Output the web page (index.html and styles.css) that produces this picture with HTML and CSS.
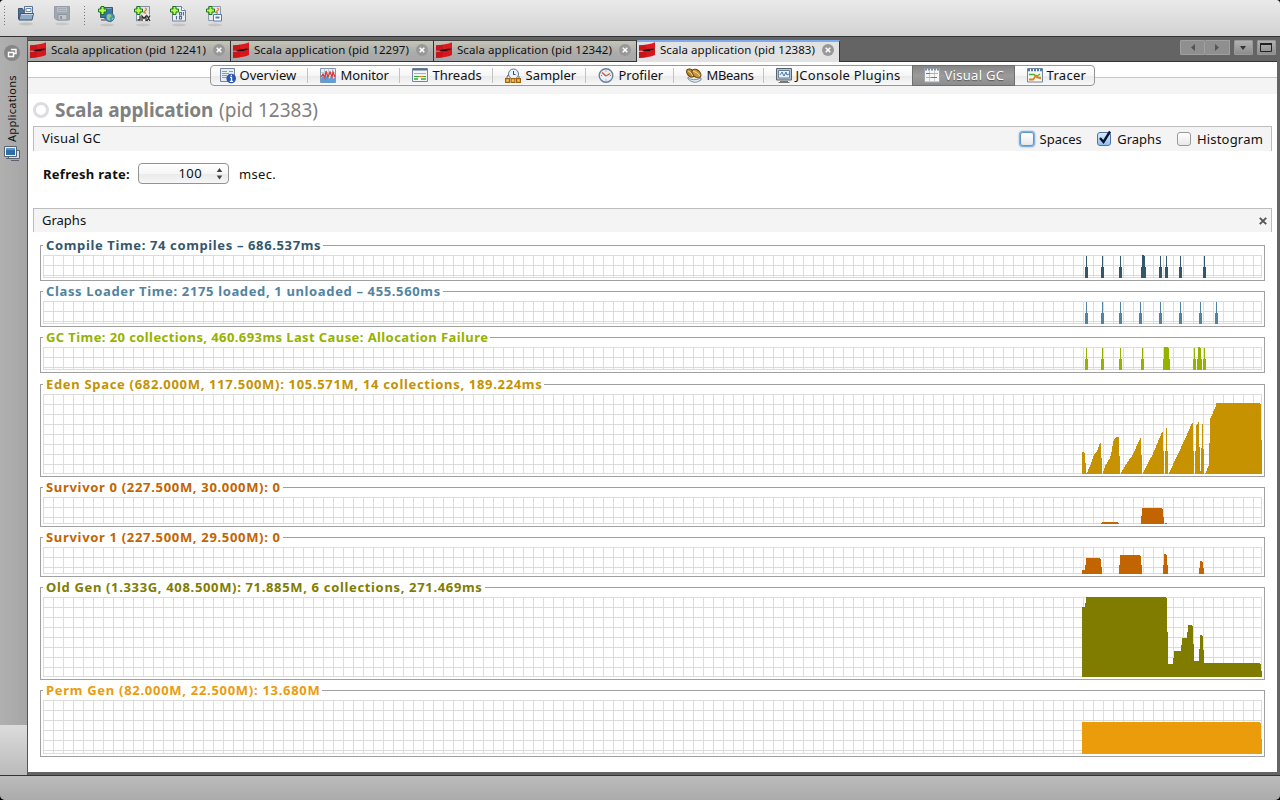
FILE: index.html
```html
<!DOCTYPE html>
<html lang="en">
<head>
<meta charset="utf-8">
<title>VisualVM</title>
<link rel="stylesheet" href="styles.css">
</head>
<body>
<svg class="defs" width="0" height="0">
  <defs>
    <symbol id="scala" viewBox="0 0 17 16">
      <path d="M0 3.300Q10 3 16 .3V6.500Q9 9 0 8.800z" fill="#dc1a20"/>
      <path d="M0 9.800Q10 9.800 16 7V13Q10 15.500 0 16z" fill="#d8161c"/>
      <path d="M3 8.200Q9 6.800 16 6.500V7.300Q11 9.600 5 9.600z" fill="#2a0c0e"/>
      <path d="M0 3.300Q4 3.200 7 2.800V8Q4 8.600 0 8.800zM0 9.800Q4 9.800 7 9.500V15.300L0 16z" fill="#a80e14" opacity=".35"/>
    </symbol>
    <symbol id="close" viewBox="0 0 12 12">
      <circle cx="6" cy="6" r="6" fill="#989898"/>
      <path d="M3.700 3.700l4.600 4.600M8.300 3.700l-4.600 4.600" stroke="#fff" stroke-width="1.600"/>
    </symbol>
    <symbol id="plus" viewBox="0 0 9 9">
      <path d="M3 .5h3V3h2.500v3H6v2.500H3V6H.5V3H3z" fill="#b4f650" stroke="#187a10"/>
    </symbol>
  </defs>
</svg>
<div class="window">
  <header class="toolbar">
    <i class="grip"></i>
    <svg class="tool open" width="18" height="22" viewBox="0 0 18 22">
      <ellipse cx="9" cy="19" rx="7" ry="1.500" fill="#c2c2c2"/>
      <path d="M1.500 3.500h4l1 2h3V14h-8z" fill="#55708f" stroke="#3c5673"/>
      <path d="M7.500 1.500h8v9h-8z" fill="#eef4fa" stroke="#5b7391"/>
      <path d="M9 3.500h5v3H9z" fill="#fff" stroke="#5f86b4"/>
      <path d="M3.500 8.500h13l-1.500 6.500h-13z" fill="#8eacc9" stroke="#3c5673"/>
      <path d="M4 9.500h12" stroke="#c3d6e8"/>
    </svg>
    <svg class="tool save" width="18" height="22" viewBox="0 0 18 22">
      <ellipse cx="9" cy="19" rx="7" ry="1.500" fill="#c8c8c8"/>
      <path d="M1.500 1.500h15v13.500h-13l-2-2z" fill="#a0a7b0" stroke="#969da6"/>
      <path d="M4 2h10v5H4z" fill="#b8bec6"/><path d="M5 3.500h8M5 5.500h8" stroke="#a2a9b2"/>
      <path d="M5 9.500h9V15H5z" fill="#c2c6cc" stroke="#8e959e"/><path d="M7 11h2v3H7z" fill="#8e959e"/>
    </svg>
    <i class="grip second"></i>
    <svg class="tool a1" width="17" height="22" viewBox="0 0 17 22">
      <ellipse cx="9" cy="19" rx="7" ry="1.500" fill="#c4c4c4"/>
      <path d="M2.500 1.500h12v10h-12z" fill="#3f75ae" stroke="#4b525b"/>
      <path d="M3.500 2.500h10" stroke="#75a3cf"/><path d="M6 12h4v2H3" stroke="#3b424b" fill="#d8d8d8"/>
      <circle cx="11.800" cy="11.200" r="4.400" fill="#4b91c4" stroke="#2e6aa0"/>
      <path d="M9.500 8.500q4-1 4 2l-2 1 .5 3q-3 0-3-3zM14 12l2 0-1.500 2.500z" fill="#8fcf7c"/>
      <use href="#plus" width="9" height="9"/>
    </svg>
    <svg class="tool a2" width="17" height="22" viewBox="0 0 17 22">
      <ellipse cx="9" cy="19" rx="7" ry="1.500" fill="#c4c4c4"/>
      <path d="M2.500.500h13v14.500h-13z" fill="#dfe5ec" stroke="#7e8ea3"/>
      <path d="M11 2q3 1 0 3t1 2" stroke="#e77b1d" fill="none" stroke-width="1.300"/>
      <path d="M3 8.500h13.500v7H3z" fill="#f6f6f6" opacity=".85"/>
      <path d="M6 9.500V14H3.500M8 15v-5l2 2.500 2-2.500v5M13 9.500l3 5.500M16 9.500l-3 5.500" stroke="#303030" fill="none" stroke-width="1.300"/>
      <use href="#plus" width="9" height="9"/>
    </svg>
    <svg class="tool a3" width="17" height="22" viewBox="0 0 17 22">
      <ellipse cx="9" cy="19" rx="7" ry="1.500" fill="#c4c4c4"/>
      <path d="M2.500.500h9l4 4v10.500h-13z" fill="#e8eef4" stroke="#71839a"/><path d="M11.500.500v4h4" fill="#fff" stroke="#71839a"/>
      <path d="M9.500 6.500h2v2.500h-2zM13.500 6v3.500M6.500 10v3.500M9.500 10.500h2V13h-2z" stroke="#5a6d85" fill="none" stroke-width="1.100"/>
      <use href="#plus" width="9" height="9"/>
    </svg>
    <svg class="tool a4" width="17" height="22" viewBox="0 0 17 22">
      <ellipse cx="9" cy="19" rx="7" ry="1.500" fill="#c4c4c4"/>
      <path d="M2.500.500h12v14h-12z" fill="#e4e9ef" stroke="#8d9bad"/>
      <path d="M11 2q3 1 0 3t1 2" stroke="#e77b1d" fill="none" stroke-width="1.300"/>
      <path d="M7.500 8.500h8V15h-8z" fill="#fff" stroke="#4a7cc0"/><path d="M9.500 11.500h4" stroke="#4a7cc0" stroke-width="2"/>
      <use href="#plus" width="9" height="9"/>
    </svg>
  </header>

  <div class="middle">
    <aside class="rail">
      <svg width="16" height="16" viewBox="0 0 16 16">
        <circle cx="8" cy="8" r="8" fill="#868686"/>
        <path d="M7 4.500h5v4H9.500M4.500 7.500h5v4h-5z" fill="none" stroke="#fff" stroke-width="1.400"/>
      </svg>
      <span class="rail-label">Applications</span>
      <svg width="16" height="16" viewBox="0 0 16 16">
        <path d="M4.500 4.500h11v8h-11zM7 14.500h8" fill="#ddd" stroke="#59636f"/>
        <path d="M.5.500h12v10H.5z" fill="#f2f2f2" stroke="#59636f"/><path d="M2 2h9v7H2z" fill="#2c6dab"/>
        <path d="M2 2h9v2H2z" fill="#5c94c6"/><path d="M2 12.500h8" stroke="#59636f"/>
      </svg>
      <i class="rail-foot"></i>
    </aside>

    <main class="pane">
      <nav class="tabs">
        <div class="tab"><svg width="17" height="16"><use href="#scala"/></svg><span>Scala application (pid 12241)</span><svg width="12" height="12"><use href="#close"/></svg></div>
        <div class="tab"><svg width="17" height="16"><use href="#scala"/></svg><span>Scala application (pid 12297)</span><svg width="12" height="12"><use href="#close"/></svg></div>
        <div class="tab"><svg width="17" height="16"><use href="#scala"/></svg><span>Scala application (pid 12342)</span><svg width="12" height="12"><use href="#close"/></svg></div>
        <div class="tab active"><svg width="17" height="16"><use href="#scala"/></svg><span>Scala application (pid 12383)</span><svg width="12" height="12"><use href="#close"/></svg></div>
        <div class="tab-tools">
          <b class="off"><svg width="24" height="13"><path d="M14 3v7l-4-3.500z" fill="#555"/></svg></b>
          <b class="off joined"><svg width="24" height="13"><path d="M10 3v7l4-3.500z" fill="#555"/></svg></b>
          <b class="menu"><svg width="17" height="13"><path d="M5 5h6l-3 4z" fill="#333"/></svg></b>
          <b class="max"><svg width="17" height="13"><path d="M2.500 2.500h11v8h-11z" fill="none" stroke="#222"/><path d="M2 3h12" stroke="#222" stroke-width="2"/></svg></b>
        </div>
      </nav>

      <div class="content">
        <div class="views">
          <div class="segments">
            <div class="seg s1"><svg width="16" height="16" viewBox="0 0 16 16"><path d="M.5.500h14v13H.5z" fill="#e7edf3" stroke="#71869e"/><path d="M2 3.500h5M2 5.500h7M2 7.500h5M2 9.500h5M9 3.500h4" stroke="#8b9aab"/><circle cx="11.200" cy="10.500" r="4.800" fill="#2c56b4"/><path d="M10 9.300h1.500v4M9.800 13.300h3.400M10.700 7.300h1.300" stroke="#fff" fill="none" stroke-width="1.300"/></svg><span>Overview</span></div>
            <div class="seg s2"><svg width="16" height="16" viewBox="0 0 16 16"><path d="M.5.500h15v14H.5z" fill="#e8f1f8" stroke="#8297ad"/><path d="M4.500 1v13M8.500 1v13M12.500 1v13M1 4.500h14M1 8.500h14" stroke="#bdd0df"/><path d="M1 10l2-2 2 3 2-4 2 4 2-3 2 3 2-2v5.500H1z" fill="#5b9fdc"/><path d="M1 9l2-3 2 4 1-7 2 6 2-5 2 5 1-5 2 5" fill="none" stroke="#dd3b35" stroke-width="1.300"/></svg><span>Monitor</span></div>
            <div class="seg s3"><svg width="16" height="16" viewBox="0 0 16 16"><path d="M.5.500h15v13H.5z" fill="#f3f6f8" stroke="#71869e"/><path d="M1 1.500h14" stroke="#58708b" stroke-width="2"/><path d="M2 5.500h12" stroke="#e3ac21"/><path d="M2 8.500h5M11 8.500h3" stroke="#39a935"/><path d="M7 8.500h4" stroke="#e98722"/><path d="M2 11h4M9 11h5" stroke="#39a935" stroke-width="1.500"/></svg><span>Threads</span></div>
            <div class="seg s4"><svg width="16" height="16" viewBox="0 0 16 16"><circle cx="8.500" cy="6" r="5" fill="#e9f2fa" stroke="#62748a"/><path d="M8.500 3v3.500h2" fill="none" stroke="#445"/><path d="M2 10V9q0-2 2-2M8 10v3M14 10V8" fill="none" stroke="#567"/><path d="M.6 10.600h3.800v3.800H.6zM6.100 10.600h3.800v3.800H6.100zM11.600 10.600h3.800v3.800h-3.800z" fill="#f6c252" stroke="#9e6414" stroke-width="1.200"/></svg><span>Sampler</span></div>
            <div class="seg s5"><svg width="16" height="16" viewBox="0 0 16 16"><circle cx="8" cy="7.500" r="6.800" fill="#e6f0fa" stroke="#6e7f92" stroke-width="1.400"/><path d="M8 2.500v1M8 11.500v1M3 7.500h1M12 7.500h1" stroke="#78889a"/><path d="M4 4.500l4 3.500" stroke="#df5b19" stroke-width="1.600"/><path d="M8 8l4-2.500" stroke="#df5b19" stroke-width="1.300"/></svg><span>Profiler</span></div>
            <div class="seg s6"><svg width="16" height="16" viewBox="0 0 16 16"><path d="M2 9q4 5 13 1v2q-7 5-13-1z" fill="#e8eef4" stroke="#7d8fa4"/><ellipse cx="4.500" cy="5" rx="3.200" ry="4.600" transform="rotate(-40 4.500 5)" fill="#b9852c" stroke="#5a3b0a"/><ellipse cx="10.500" cy="5.500" rx="3.400" ry="5.200" transform="rotate(-48 10.500 5.500)" fill="#c8953a" stroke="#5a3b0a"/><path d="M2 3q3 1 5 5M7 3q4 1 7 5" fill="none" stroke="#f6dc9b"/></svg><span>MBeans</span></div>
            <div class="seg s7"><svg width="16" height="16" viewBox="0 0 16 16"><path d="M.5.500h15v11.500H.5z" fill="#b9c1ca" stroke="#58636f"/><path d="M2.500 2.500h11v7.500h-11z" fill="#e4f0fa" stroke="#6d7f93"/><path d="M4 7l2-3 2 4 2-4 1 3 2-1" fill="none" stroke="#4579b5"/><path d="M4 13.500h8M2.500 14.500h11" stroke="#777"/></svg><span>JConsole Plugins</span></div>
            <div class="seg s8 on"><svg width="16" height="16" viewBox="0 0 16 16"><path d="M.5.500h15v13.500H.5z" fill="#f5f7f5" stroke="#9aa5b0"/><path d="M1 1.500h14" stroke="#788ca3" stroke-width="2" stroke-dasharray="2 1"/><path d="M5.500 3v11M10.500 3v11" stroke="#ccc"/><path d="M2 5.500h4M7 9.500h6" stroke="#38a820"/><path d="M6 5.500h8M2 9.500h5" stroke="#e0b320"/></svg><span>Visual GC</span></div>
            <div class="seg s9"><svg width="16" height="16" viewBox="0 0 16 16"><path d="M.5.500h15v13.500H.5z" fill="#f5f7f5" stroke="#71869e"/><path d="M1 2h14" stroke="#4f78ae" stroke-width="2.500" stroke-dasharray="2 1"/><path d="M2 6.500h5l3 3h4M9 9l4-3" stroke="#48b530" fill="none" stroke-width="1.400"/><path d="M2 11.500h4l3-4 2 2 3 1" stroke="#ea7d1c" fill="none" stroke-width="1.800"/></svg><span>Tracer</span></div>
          </div>
        </div>

        <h1 class="title"><i class="ring"></i><strong>Scala application</strong><span>(pid 12383)</span></h1>

        <div class="bar options">
          <span class="name vgc">Visual GC</span>
          <label class="check focus"><i></i><span class="spaces">Spaces</span></label>
          <label class="check checked"><i><svg width="17" height="17" viewBox="0 0 17 17"><path d="M4 8l3.500 4L14 1.500" fill="none" stroke="#0b1530" stroke-width="2.400"/></svg></i><span class="graphs">Graphs</span></label>
          <label class="check"><i></i><span class="histogram">Histogram</span></label>
        </div>
        <div class="refresh">
          <strong>Refresh rate:</strong>
          <div class="spinner"><span>100</span><svg width="7" height="12" viewBox="0 0 7 12"><path d="M3.500 0l2.800 4H.7zM3.500 11.500l2.800-4H.7z" fill="#444"/></svg></div>
          <span class="unit">msec.</span>
        </div>
        <div class="bar graphs-bar"><span class="name">Graphs</span><svg width="8" height="8" viewBox="0 0 8 8"><path d="M.8.800l6.400 6.400M7.200.800L.8 7.200" stroke="#555" stroke-width="1.900"/></svg></div>

        <section class="charts">
          <div class="chart compile"><span class="legend">Compile Time: 74 compiles – 686.537ms</span>
            <div class="grid"><svg width="180" height="23"><path d="M4 1h1v11h1v11H3V12h1zM20 1h1v11h1v11h-3V12h1zM38 1h1v11h1v11h-3V12h1zM60 0h2v1h1v11h1v11h-5V12h1zM78 1h1v11h1v11h-3V12h1zM84 1h1v11h1v11h-3V12h1zM98 1h1v11h1v11h-3V12h1zM122 1h1v11h1v11h-3V12h1z"/></svg></div></div>
          <div class="chart loader"><span class="legend">Class Loader Time: 2175 loaded, 1 unloaded – 455.560ms</span>
            <div class="grid"><svg width="180" height="23"><path d="M4 1h1v11h1v11H3V12h1zM20 1h1v11h1v11h-3V12h1zM38 1h1v11h1v11h-3V12h1zM58 1h1v11h1v11h-3V12h1zM78 1h1v11h1v11h-3V12h1zM98 1h1v11h1v11h-3V12h1zM118 1h1v11h1v11h-3V12h1zM134 1h1v11h1v11h-3V12h1z"/></svg></div></div>
          <div class="chart gc"><span class="legend">GC Time: 20 collections, 460.693ms Last Cause: Allocation Failure</span>
            <div class="grid"><svg width="180" height="23"><path d="M4 1h1v11h1v11H3V12h1zM20 1h1v11h1v11h-3V12h1zM38 1h1v11h1v11h-3V12h1zM60 1h1v11h1v11h-3V12h1zM82 0h4v1h1v11h1v11h-7V12h1zM112 1h1v11h1v11h-3V12h1zM116 0h2v1h1v11h1v11h-5V12h1zM122 1h1v11h1v11h-3V12h1z"/></svg></div></div>
          <div class="chart eden"><span class="legend">Eden Space (682.000M, 117.500M): 105.571M, 14 collections, 189.224ms</span>
            <div class="grid"><svg width="180" height="80"><path d="M0 58h2v1h1v10h1v11H0zM4 80v-1h1l3-7 4-11 3-4 3-8h1v15h1v16zM21 80v-1l2-7 5-8 2-8 1-8 3-5h3v19h1v18zM39 80v-1l6-10 5-7 9-19v18h1v19zM61 80v-1l7-14 2-3 10-24h1v19h1v23zM83 80V57h1V34h1v23h1v23zM87 80v-1l16-34 7-16h1v28h1v23zM113 80V57h1V32l2-3v-1h1v25h1v24h1V54h1V30h1v25h1v25zM123 80v-1h1l1-4 2-4V49h1V25l6-13V9h44v1h1v36h1v34z"/></svg></div></div>
          <div class="chart s0"><span class="legend">Survivor 0 (227.500M, 30.000M): 0</span>
            <div class="grid"><svg width="180" height="27"><path d="M19 27v-1h1v-1h16v1h1v1zM59 27v-8h1v-8h20v1h1v8h1v7zM83 26h2v1h-2z"/></svg></div></div>
          <div class="chart s1c"><span class="legend">Survivor 1 (227.500M, 29.500M): 0</span>
            <div class="grid"><svg width="180" height="27"><path d="M0 27v-4h3v-5h1v-7h14v1h1v8h1v7zM37 27v-9h1V8h20v1h1v9h1v9zM81 27v-9h1V7h2v1h1v10h1v9zM117 27v-6h1v-7h2v1h1v6h1v6z"/></svg></div></div>
          <div class="chart old"><span class="legend">Old Gen (1.333G, 408.500M): 71.885M, 6 collections, 271.469ms</span>
            <div class="grid"><svg width="180" height="80"><path d="M0 80V10h3V6h1V0h80v1h1v34h1v32h5v-6h1v-7h7v-6h1v-7h5v-6h1v-7h4v1h1v18h1v17h5V52h1V38h2v1h1v14h1v13h56v1h1v7h1v6z"/></svg></div></div>
          <div class="chart perm"><span class="legend">Perm Gen (82.000M, 22.500M): 13.680M</span>
            <div class="grid"><svg width="180" height="54"><path d="M0 54V22h178v1h1v16h1v15z"/></svg></div></div>
        </section>
      </div>
    </main>
  </div>
  <footer class="status"></footer>
</div>
</body>
</html>
```
FILE: styles.css
```css
* { box-sizing: border-box; }
body { margin: 0; background: #000; font-family: "Noto Sans", "Open Sans", sans-serif; font-size: 13px; color: #111; }
svg { display: block; flex: none; }
span, strong { white-space: nowrap; }
.defs { position: absolute; }
.window { width: 1280px; height: 800px; display: flex; flex-direction: column; overflow: hidden; border-radius: 4px 4px 5px 5px; background: #646464; }

.toolbar { height: 37px; flex: none; display: flex; align-items: flex-start; padding: 5px 0 0 4px; background: linear-gradient(#eaeaea, #d2d2d2); border-bottom: 1px solid #333; }
.grip { width: 1px; height: 20px; margin-top: 1px; background: repeating-linear-gradient(#777 0 1px, transparent 1px 3px); }
.second { margin-left: 13px; }
.open { margin-left: 12px; }
.save { margin-left: 18px; }
.a1 { margin: 1px 0 0 13px; }
.a2, .a3, .a4 { margin: 1px 0 0 19px; }

.middle { height: 738px; flex: none; display: flex; }
.rail { width: 28px; flex: none; display: flex; flex-direction: column; align-items: center; padding: 8px 3px 0 0; background: linear-gradient(90deg, #b0b0b0, #a6a6a6); border-right: 1px solid #555; }
.rail-label { width: 20px; height: 68px; margin: 13px 0 4px; writing-mode: vertical-rl; transform: rotate(180deg); font-size: 11px; line-height: 20px; letter-spacing: .3px; }
.rail-foot { width: 27px; height: 50px; margin: auto -3px 0 0; background: linear-gradient(#dcdcdc, #bababa); }

.pane { flex: 1; padding: 3px 3px 3px 0; display: flex; flex-direction: column; background: #646464; }
.tabs { height: 22px; flex: none; display: flex; border-bottom: 1px solid #333; }
.tab { width: 203px; height: 21px; flex: none; display: flex; align-items: center; padding: 0 0 2px 2px; background: linear-gradient(#c5c5b6, #ababab 60%, #a8a8a8); border-right: 1px solid #333; border-top: 1px solid #444; font-size: 11.5px; letter-spacing: .06px; }
.tab span { width: 162px; margin-left: 4px; line-height: 18px; }
.tab.active { height: 22px; padding-bottom: 4px; background: #e2e2e2; border-top: 2px solid #7eaaf0; }
.tab-tools { display: flex; margin: 0 1px 0 auto; }
.tab-tools b { height: 15px; border: 1px solid #999; border-radius: 1px; background: linear-gradient(#b2b2b2, #8c8c8c); }
.tab-tools .off { width: 25px; background: #8f8f8f; border-color: #a0a0a0; }
.tab-tools .joined { border-left: 0; }
.menu, .max { width: 19px; margin-left: 4px; }

.content { flex: 1; background: #fff; }
.views { height: 32px; display: flex; justify-content: center; padding: 3px 1px 0 0; background: linear-gradient(#fff 0 15px, #c8c8c8 15px 16px, #f4f4f4 16px); }
.segments { height: 21px; display: flex; align-items: center; border: 1px solid #969696; border-radius: 4px; background: linear-gradient(#fff, #f6f6f6 50%, #e9e9e9 50%, #f8f8f8); }
.seg { height: 15px; display: flex; align-items: center; padding-left: 12px; gap: 5px; border-right: 1px solid #c3c3c3; }
.seg span { line-height: 18px; margin-top: -2px; }
.s1 { width: 97px; padding-left: 9px; gap: 4px; }
.s2 { width: 92px; letter-spacing: -.1px; }
.s3, .s4 { width: 93px; }
.s5 { width: 88px; }
.s6 { width: 90px; letter-spacing: -.35px; }
.s7 { width: 148px; gap: 4px; letter-spacing: .27px; border-right: 0; }
.s8 { width: 103px; letter-spacing: .3px; }
.s9 { width: 79px; gap: 4px; letter-spacing: .3px; border-right: 0; }
.seg.on { height: 21px; margin: -1px 0; background: linear-gradient(#858585, #9b9b9b 50%, #8d8d8d); border: 1px solid #6e6e6e; color: #fff; padding-left: 11px; text-shadow: 0 1px 1px #555; }

.title { height: 32px; display: flex; align-items: center; margin: 0; padding: 0 0 1px 5px; font-size: 19px; line-height: 30px; font-weight: 400; color: #808080; }
.title strong { width: 158px; margin: 0 6px; letter-spacing: -.08px; }
.ring { width: 16px; height: 16px; border: 3px solid #dcdde2; border-radius: 50%; }

.bar { display: flex; align-items: center; margin: 0 5px; padding: 0 8px; background: #f4f4f4; border: 1px solid #bcbcbc; border-bottom: 0; }
.options { height: 25px; }
.name { margin: -2px auto 0 0; }
.vgc { letter-spacing: .2px; }
.histogram { letter-spacing: .2px; }
.check { display: flex; align-items: center; }
.check + .check { margin-left: 15.5px; }
.check i { width: 14px; height: 14px; margin-right: 6px; border: 1px solid #989898; border-radius: 3px; background: linear-gradient(#fff, #e9e9e9); }
.check.focus i { border-color: #6294c8; box-shadow: 0 0 0 1px #7fb0e2, 0 0 2px 1px #7fb0e2; }
.check.checked i { border-color: #5470a8; background: linear-gradient(#dbeafa, #8fc2f0); }
.check i svg { margin: -3px 0 0 -2px; }

.refresh { height: 57px; display: flex; align-items: center; padding: 0 0 12px 15px; }
.refresh strong { width: 95px; letter-spacing: .28px; padding-top: 1px; }
.spinner { width: 91px; height: 21px; display: flex; align-items: center; justify-content: flex-end; gap: 14px; padding-right: 5px; border: 1px solid #939393; border-radius: 4px; background: linear-gradient(#fff, #f6f6f6 50%, #e9e9e9 50%, #f6f6f6); }
.spinner span { margin-top: -1px; letter-spacing: .4px; }
.unit { margin-left: 10px; letter-spacing: .35px; padding-top: 1px; }
.graphs-bar { height: 24px; padding-right: 4px; }

.charts { display: flex; flex-direction: column; gap: 10px; padding: 13px 12px 0; }
.chart { position: relative; height: 36px; padding: 9px 2px 2px; border: 1px solid #a0a0a0; letter-spacing: .68px; }
.legend { position: absolute; left: 2px; top: -9px; height: 17px; padding: 0 2px 0 3px; background: #fff; line-height: 17px; font-weight: 700; }
.grid { height: 100%; display: flex; justify-content: flex-end; background: linear-gradient(#dcdcdc, #dcdcdc) right / 1px 100% no-repeat, linear-gradient(#dcdcdc, #dcdcdc) bottom / 100% 1px no-repeat, linear-gradient(#dcdcdc 1px, transparent 1px) 0 0 / 10px 10px, linear-gradient(90deg, #dcdcdc 1px, transparent 1px) 0 0 / 10px 10px; }
.grid svg { fill: currentColor; shape-rendering: crispEdges; }
.compile { color: #35576b; letter-spacing: .63px; }
.loader { color: #5283a0; letter-spacing: .64px; }
.gc { color: #96b200; letter-spacing: .41px; }
.eden { height: 93px; margin-top: 1px; color: #c69200; }
.s0, .s1c { height: 40px; color: #c26400; }
.old { height: 93px; color: #807c00; letter-spacing: .66px; }
.perm { height: 67px; color: #eb9c0a; letter-spacing: .71px; }

.status { flex: 1; border-top: 1px solid #333; background: linear-gradient(#bcbcbc, #ababab); }
```
